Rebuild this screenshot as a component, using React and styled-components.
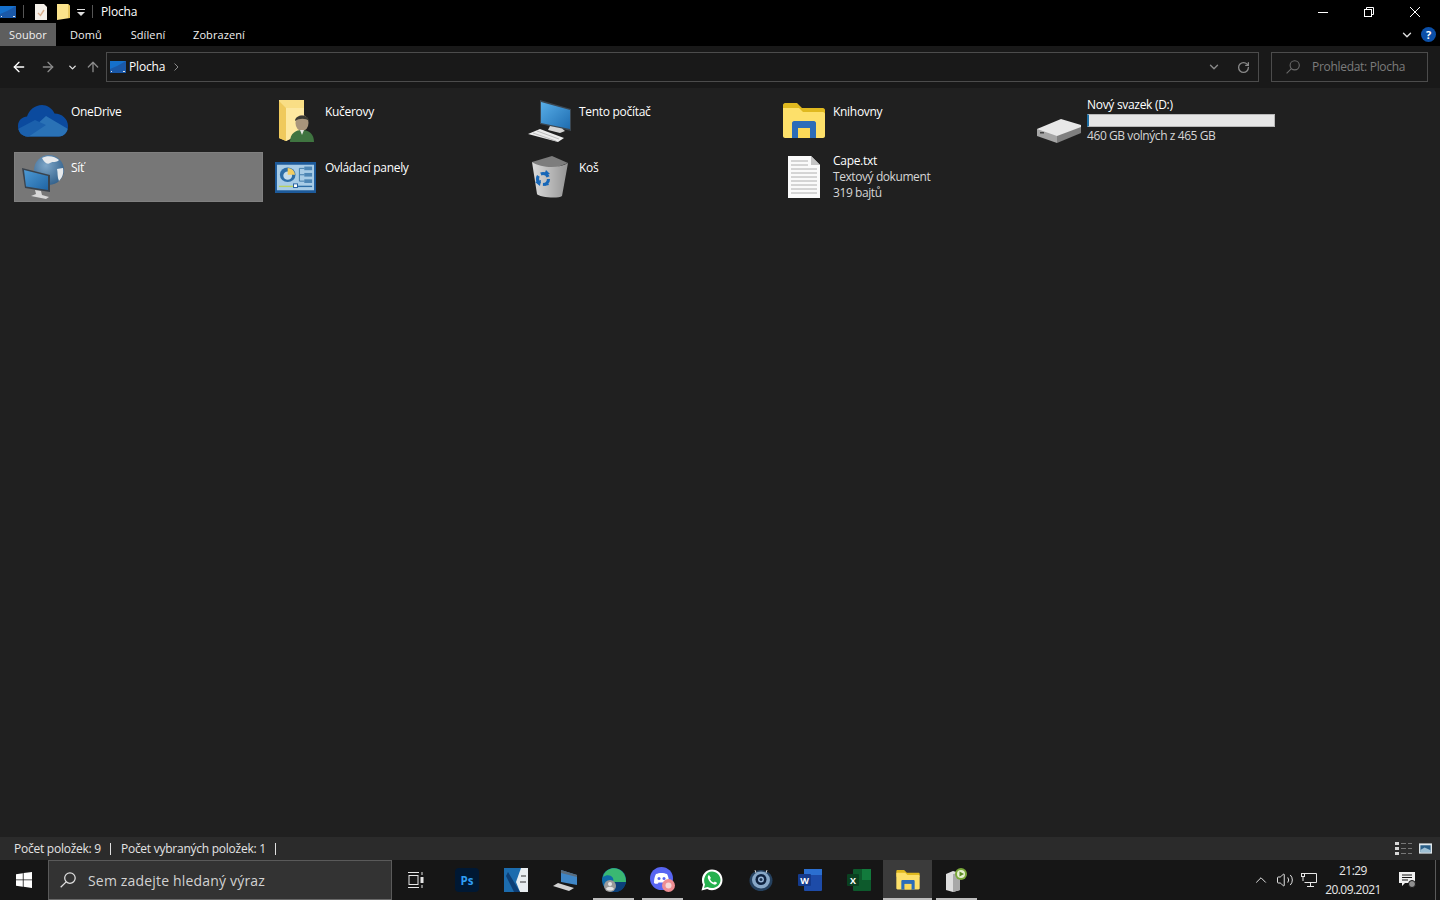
import React from "react";
import styled, { createGlobalStyle } from "styled-components";
import { ArrowLeft, ArrowRight, ArrowUp, ChevronDown, RotateCw, ChevronUp, Volume2 } from "lucide-react";

const GlobalStyle = createGlobalStyle`
  html, body { margin: 0; padding: 0; background: #202020; }
  body { font-family: "Open Sans", "Noto Sans", "Liberation Sans", sans-serif; font-size: 12px; color: #fff; }
  * { box-sizing: border-box; }
`;

const Page = styled.div`
  width: 1440px;
  height: 900px;
  display: flex;
  flex-direction: column;
  overflow: hidden;
  background: #202020;
`;

const TitleBar = styled.div`
  height: 23px;
  background: #000;
  display: flex;
  align-items: center;
`;
const QuickIcons = styled.div`
  width: 101px;
  height: 23px;
  display: flex;
  align-items: center;
`;
const QuickGap = styled.span`
  width: ${(p) => p.$w}px;
`;
const TitleSep = styled.div`
  width: 1px;
  height: 13px;
  background: #555;
  margin: ${(p) => p.$margin};
`;
const TitleText = styled.div`
  flex: 1;
  font-size: 12px;
  letter-spacing: -0.15px;
`;
const WinButton = styled.div`
  width: 46px;
  height: 22px;
  display: flex;
  align-items: center;
  justify-content: center;
`;
const WinControls = styled.div`
  display: flex;
  padding-right: 2px;
`;

const Ribbon = styled.div`
  height: 23px;
  background: #000;
  display: flex;
  align-items: center;
`;
const RibbonTab = styled.div`
  height: 23px;
  display: flex;
  align-items: center;
  justify-content: center;
  width: ${(p) => p.$w}px;
  background: ${(p) => (p.$active ? "#5e5e5e" : "transparent")};
  font-size: 11px;
  letter-spacing: 0.1px;
  color: #f0f0f0;
`;
const RibbonRight = styled.div`
  margin-left: auto;
  display: flex;
  align-items: center;
  gap: 7px;
  padding-right: 4px;
`;
const Help = styled.div`
  width: 15px;
  height: 15px;
  border-radius: 50%;
  background: #0b4fa8;
  color: #fff;
  font-size: 11px;
  font-weight: 700;
  display: flex;
  align-items: center;
  justify-content: center;
`;

const AddressRow = styled.div`
  height: 42px;
  background: #191919;
  display: flex;
  align-items: center;
  padding-left: 11px;
`;
const NavButton = styled.div`
  width: ${(p) => p.$w}px;
  margin-right: ${(p) => p.$mr || 0}px;
  flex-shrink: 0;
  display: flex;
  align-items: center;
  justify-content: center;
  svg {
    flex-shrink: 0;
  }
`;
const AddressBox = styled.div`
  width: 1153px;
  height: 30px;
  flex-shrink: 0;
  margin-left: 1px;
  border: 1px solid #4c4c4c;
  display: flex;
  align-items: center;
  padding-left: 3px;
`;
const AddressText = styled.span`
  font-size: 12px;
  letter-spacing: -0.15px;
  margin: 0 9px 2px 3px;
`;
const AddressTools = styled.div`
  margin-left: auto;
  display: flex;
  align-items: center;
  gap: 16px;
  padding-right: 8px;
`;
const SearchBox = styled.div`
  width: 157px;
  height: 30px;
  flex-shrink: 0;
  margin-left: 12px;
  border: 1px solid #4c4c4c;
  display: flex;
  align-items: center;
  padding-left: 14px;
  gap: 12px;
  color: #7c7c7c;
  font-size: 12px;
  letter-spacing: -0.3px;
  span {
    margin-bottom: 2px;
  }
`;

const Content = styled.div`
  flex: 1;
  background: #202020;
  padding: 8px 0 0 14px;
  display: grid;
  grid-template-columns: repeat(5, 249px);
  grid-auto-rows: 50px;
  column-gap: 5px;
  row-gap: 6px;
  align-content: start;
`;
const Tile = styled.div`
  height: 50px;
  display: flex;
  background: ${(p) => (p.$selected ? "#777777" : "transparent")};
  border: 1px solid ${(p) => (p.$selected ? "#808080" : "transparent")};
`;
const IconSlot = styled.div`
  width: 56px;
  flex-shrink: 0;
  padding: ${(p) => p.$drop || 0}px ${(p) => p.$pr || 1}px 0 0;
  display: flex;
  align-items: center;
  justify-content: center;
`;
const TileText = styled.div`
  padding-top: ${(p) => (p.$multi ? 0 : 7)}px;
  line-height: 16px;
  font-size: 12px;
  letter-spacing: -0.3px;
  color: #fff;
  white-space: nowrap;
`;
const SubLine = styled.div`
  color: #d6d6d6;
  letter-spacing: -0.42px;
`;
const UsageBar = styled.div`
  width: 188px;
  height: 13px;
  margin: 1px 0 1px;
  background: #e6e6e6;
  border: 1px solid #b8b8b8;
  border-left: 2px solid #1c6ea4;
`;

const StatusBar = styled.div`
  height: 23px;
  background: #2b2b2b;
  display: flex;
  align-items: center;
  padding: 0 8px 0 14px;
  font-size: 12px;
  letter-spacing: -0.25px;
  color: #e4e4e4;
`;
const StatusSep = styled.div`
  width: 1px;
  height: 12px;
  background: #e0e0e0;
  margin: 0 10px 0 9px;
`;
const StatusRight = styled.div`
  margin-left: auto;
  display: flex;
  align-items: center;
  gap: 7px;
`;

const Taskbar = styled.div`
  height: 40px;
  background: #161616;
  display: flex;
  align-items: stretch;
`;
const StartButton = styled.div`
  width: 48px;
  display: flex;
  align-items: center;
  justify-content: center;
`;
const SearchField = styled.div`
  width: 344px;
  background: #333;
  border: 1px solid #5a5a5a;
  border-bottom-color: #6a6a6a;
  display: flex;
  align-items: center;
  padding-left: 11px;
  gap: 12px;
  font-size: 14px;
  letter-spacing: 0.18px;
  color: #d2d2d2;
`;
const TaskButton = styled.div`
  position: relative;
  width: ${(p) => p.$w || 49}px;
  padding-right: ${(p) => p.$pr || 0}px;
  display: flex;
  align-items: center;
  justify-content: center;
  background: ${(p) => (p.$active ? "#3b3b3b" : "transparent")};
  &::after {
    content: "";
    display: ${(p) => (p.$running ? "block" : "none")};
    position: absolute;
    left: ${(p) => (p.$active ? 0 : 4)}px;
    right: ${(p) => (p.$active ? 0 : 4)}px;
    bottom: 0;
    height: 2px;
    background: #bdbdbd;
  }
`;
const Tray = styled.div`
  margin-left: auto;
  display: flex;
  align-items: center;
`;
const TrayIcon = styled.div`
  width: 24px;
  display: flex;
  align-items: center;
  justify-content: center;
`;
const Clock = styled.div`
  width: 64px;
  text-align: center;
  font-size: 12px;
  letter-spacing: -0.55px;
  line-height: 19px;
  color: #e8e8e8;
`;
const NotifyButton = styled.div`
  width: 44px;
  margin-right: 6px;
  display: flex;
  align-items: center;
  justify-content: center;
`;
const ShowDesktop = styled.div`
  width: 1px;
  align-self: stretch;
  margin-right: 4px;
  background: #5a5a5a;
`;

// --- drawings ---

const DesktopMini = () => (
  <svg width="16" height="12" viewBox="0 0 16 12">
    <rect width="16" height="12" fill="#1570cc" />
    <path d="M0 8 Q8 5 16 0 V12 H0Z" fill="#1a58a8" />
    <rect y="10" x="1" width="1" height="1" fill="#e6e6e6" />
    <rect y="10" x="13" width="2" height="1" fill="#e6e6e6" />
  </svg>
);
const DocMini = () => (
  <svg width="12" height="16" viewBox="0 0 12 16">
    <path d="M0 0H9L12 3V16H0Z" fill="#f4f0ea" />
    <path d="M3 9L5.500 11.500L9 6" fill="none" stroke="#d8b090" strokeWidth="1.4" />
  </svg>
);
const FolderMini = () => (
  <svg width="13" height="16" viewBox="0 0 13 16">
    <path d="M0 0H11L13 2V14L0 16Z" fill="#fbe38c" />
    <path d="M11 0L13 2V14H11Z" fill="#e8c860" />
  </svg>
);
const QuickArrow = () => (
  <svg width="8" height="8" viewBox="0 0 8 8">
    <rect y="1" width="8" height="1" fill="#ddd" />
    <path d="M0 4H8L4 8Z" fill="#ddd" />
  </svg>
);
const MinIcon = () => (
  <svg width="10" height="10" viewBox="0 0 10 10"><rect y="5" width="10" height="1" fill="#fff" /></svg>
);
const RestoreIcon = () => (
  <svg width="10" height="10" viewBox="0 0 10 10" fill="none" stroke="#fff">
    <rect x="0.5" y="2.5" width="7" height="7" />
    <path d="M2.5 2.5V0.5H9.5V7.5H7.5" />
  </svg>
);
const CloseIcon = () => (
  <svg width="10" height="10" viewBox="0 0 10 10" stroke="#fff"><path d="M0 0L10 10M10 0L0 10" /></svg>
);
const LensIcon = ({ color, size = 14 }) => (
  <svg width={size} height={size} viewBox="0 0 14 14" fill="none" stroke={color} strokeWidth="1.1">
    <circle cx="8.7" cy="5.3" r="4.6" />
    <path d="M5.4 8.6L0.6 13.4" />
  </svg>
);

const CLOUD = "M10 31.500C3 31.500 0 26 0 21C0 15 5 11.500 9 11.500C11 5 17 0 24 0C29 0 34 3 36.500 8.500C44 8.500 50 14 50 21C50 27 46 31.500 41 31.500Z";
const OneDriveIcon = () => (
  <svg width="50" height="32" viewBox="0 0 50 32">
    <defs>
      <clipPath id="cloudClip"><path d={CLOUD} /></clipPath>
    </defs>
    <path d={CLOUD} fill="#0b4a9e" />
    <g clipPath="url(#cloudClip)">
      <path d="M5 32L28 11L50 24V32Z" fill="#2a72b6" />
      <path d="M0 24L17 15L28 20L10 32H0Z" fill="#1b60ac" />
    </g>
  </svg>
);
const UserFolderIcon = () => (
  <svg width="36" height="42" viewBox="0 0 36 42">
    <path d="M0 0H25V32L7 41L0 38Z" fill="#f9de85" />
    <path d="M0 1L7 8V41L0 38Z" fill="#efc95c" />
    <path d="M7 8H25V32L7 41Z" fill="#fde8a0" />
    <ellipse cx="23" cy="23" rx="6.500" ry="8" fill="#a8957c" />
    <path d="M16 21C16 14 30 14 30 21C27 18 20 18 16 21Z" fill="#3a3a34" />
    <path d="M11 42C11 33 17 30 23 30C30 30 35 34 35 42Z" fill="#3f7440" />
    <path d="M21 30L23 35L25 30Z" fill="#e6e6e0" />
  </svg>
);
const NetworkIcon = () => (
  <svg width="42" height="44" viewBox="0 0 42 44">
    <defs>
      <radialGradient id="globe" cx="0.4" cy="0.35" r="0.75">
        <stop offset="0" stopColor="#7ea6c8" />
        <stop offset="1" stopColor="#2c5b86" />
      </radialGradient>
      <linearGradient id="netScreen" x1="0" y1="0" x2="1" y2="1">
        <stop offset="0" stopColor="#4e9ad4" />
        <stop offset="1" stopColor="#1f64a4" />
      </linearGradient>
    </defs>
    <circle cx="27" cy="15" r="15" fill="url(#globe)" />
    <path d="M20 3C25 0 33 1 37 5C34 8 31 6 28 8C25 10 22 7 20 3ZM35 14L41 13C42 19 40 23 37 26C35 22 36 18 35 14Z" fill="#e6e9ec" />
    <path d="M0 13L28 20V37L3 33Z" fill="#39424c" />
    <path d="M2 15L26 21V35L4 31.500Z" fill="url(#netScreen)" />
    <path d="M13 35L19 36L20 40L27 42L24 44L9 41L14 39Z" fill="#d8d8d8" />
  </svg>
);
const ControlPanelIcon = () => (
  <svg width="41" height="31" viewBox="0 0 42 34" preserveAspectRatio="none">
    <rect width="42" height="34" fill="#1d5a9a" />
    <rect x="2" y="3" width="38" height="28" fill="#a8cce6" />
    <circle cx="13" cy="14" r="8" fill="#2d6da6" />
    <circle cx="13" cy="15" r="4.500" fill="#c6ddec" />
    <path d="M13 6.500A7.500 7.500 0 0 1 20.500 14H13Z" fill="#f2cc60" />
    <rect x="30" y="5" width="8" height="4" fill="#4d86b5" />
    <rect x="30" y="12" width="8" height="4" fill="#4d86b5" />
    <rect x="30" y="19" width="8" height="4" fill="#4d86b5" />
    <path d="M25 7H30M25 7V14H30M25 14V21H30" stroke="#3d78a8" fill="none" />
    <rect x="4" y="26" width="16" height="1.500" fill="#b8d060" />
    <rect x="20" y="26" width="18" height="1.500" fill="#2d6da6" />
    <rect x="19" y="24" width="4" height="4" fill="#fff" stroke="#1d5a9a" />
  </svg>
);
const ComputerIcon = () => (
  <svg width="44" height="42" viewBox="0 0 44 42">
    <defs>
      <linearGradient id="pcScreen" x1="0" y1="0" x2="1" y2="1">
        <stop offset="0" stopColor="#58aee8" />
        <stop offset="1" stopColor="#1e6cb0" />
      </linearGradient>
    </defs>
    <path d="M12 0L43 9V31L12 24Z" fill="#3b4650" />
    <path d="M13 2L42 10V29L13 23Z" fill="url(#pcScreen)" />
    <path d="M22 26L34 28.500L37 31L32 33L20 30Z" fill="#d4d4d4" />
    <path d="M12 29L36 38L30 42L0 34Z" fill="#ececec" />
    <path d="M9 31L31 39M5 33L28 41" stroke="#9b9b9b" strokeWidth="0.6" />
  </svg>
);
const LibraryIcon = ({ w = 42, h = 36 }) => (
  <svg width={w} height={h} viewBox="0 0 42 36">
    <path d="M0 2C0 1 1 0 2 0H14L19 5H40C41 5 42 6 42 7V12H0Z" fill="#e0b91f" />
    <path d="M0 5H16L20 9H40C41 9 42 10 42 11V33C42 34 41 35 40 35H2C1 35 0 34 0 33Z" fill="#fde06a" />
    <path d="M9 35V20C9 19 10 18 11 18H31C32 18 33 19 33 20V35H27V25H15V35Z" fill="#2c6cb8" />
    <rect x="15" y="25" width="12" height="10" fill="#fbd858" />
  </svg>
);
const BinIcon = () => (
  <svg width="38" height="42" viewBox="0 0 38 42">
    <defs>
      <linearGradient id="binBody" x1="0" y1="0" x2="1" y2="0">
        <stop offset="0" stopColor="#dcdcdc" />
        <stop offset="1" stopColor="#949494" />
      </linearGradient>
    </defs>
    <path d="M1 6L21 0L37 7L24 12L6 11Z" fill="#7d7d7d" />
    <path d="M1 6L6 38C7 41 27 43 31 40L37 7C28 13 10 12 1 6Z" fill="url(#binBody)" />
    <circle cx="12" cy="23" r="5.500" fill="none" stroke="#1767b8" strokeWidth="3.200" strokeDasharray="8.500 3" />
    <path d="M15 14L19 18L13 19ZM4 26L10 24L9 30ZM18 29L13 30L16 25Z" fill="#1767b8" />
  </svg>
);
const TextFileIcon = () => (
  <svg width="32" height="42" viewBox="0 0 32 42">
    <path d="M0 0H23L32 9V42H0Z" fill="#fafafa" />
    <path d="M23 0L32 9H23Z" fill="#c4c4c4" />
    <path d="M3 5H20M3 9H20M3 13H29M3 17H29M3 21H29M3 25H29M3 29H29M3 33H29M3 37H29" stroke="#9d9d9d" strokeWidth="0.8" />
  </svg>
);
const DriveIcon = () => (
  <svg width="44" height="24" viewBox="0 0 44 24">
    <path d="M0 10L24 0L44 6V10L20 20L0 14Z" fill="#e8e8e8" />
    <path d="M0 10L20 17V24L0 17Z" fill="#a5a5a5" />
    <path d="M20 17L44 8V14L20 24Z" fill="#7f7f7f" />
    <rect x="3" y="13" width="4" height="1.500" fill="#444" />
  </svg>
);

const WinLogo = () => (
  <svg width="16" height="16" viewBox="0 0 16 16" fill="#fff">
    <path d="M0 2.200L6.800 1.200V7.500H0ZM7.600 1.100L16 0V7.500H7.600ZM0 8.300H6.800V14.700L0 13.800ZM7.600 8.300H16V16L7.600 14.800Z" />
  </svg>
);
const TaskViewIcon = () => (
  <svg width="16" height="16" viewBox="0 0 16 16" fill="none" stroke="#e6e6e6">
    <path d="M0 0.500H11M0 15.500H11" />
    <rect x="1" y="3.500" width="9" height="9" />
    <path d="M14 0V3M14 13V16" />
    <rect x="12.500" y="5" width="3" height="6" fill="#e6e6e6" stroke="none" />
  </svg>
);
const PsIcon = () => (
  <svg width="24" height="24" viewBox="0 0 24 24">
    <rect width="24" height="24" rx="4" fill="#001833" />
    <text x="12" y="16.500" textAnchor="middle" fontSize="11.500" fontWeight="700" fill="#2f9df4" fontFamily="Open Sans, sans-serif">Ps</text>
  </svg>
);
const VectorIcon = () => (
  <svg width="24" height="24" viewBox="0 0 24 24">
    <rect width="24" height="24" fill="#1c6cae" />
    <path d="M24 0V24H16L12 14L17 0Z" fill="#e8edf0" />
    <path d="M4 4L16 24H10L2 8Z" fill="#0d3f76" />
    <path d="M17 8L22 8M16 14L22 14" stroke="#333" strokeWidth="1" />
  </svg>
);
const LaptopIcon = () => (
  <svg width="24" height="24" viewBox="0 0 24 24">
    <path d="M8 2L24 7V17L8 14Z" fill="#3f86c6" />
    <path d="M8 2L24 7V9L8 5Z" fill="#5a6c7c" />
    <path d="M5 15L21 20L16 23L0 18Z" fill="#d2d2d2" />
  </svg>
);
const EdgeIcon = () => (
  <svg width="26" height="26" viewBox="0 0 26 26">
    <circle cx="13" cy="13" r="12" fill="#0f6aa8" />
    <path d="M2 10C4 2 12 0 17 2C23 4 25 10 25 15H12C14 10 8 6 2 10Z" fill="#3ab872" />
    <path d="M12 15H25C24 21 20 25 14 25C10 25 8 23 7 20C9 22 14 20 12 15Z" fill="#0b3f7a" />
    <circle cx="9" cy="19" r="6" fill="#9a9a9a" />
    <circle cx="9" cy="17" r="2" fill="#e4e4e4" />
    <path d="M5 22C6 19 12 19 13 22C11 24 7 24 5 22Z" fill="#e4e4e4" />
  </svg>
);
const DiscordIcon = () => (
  <svg width="26" height="26" viewBox="0 0 26 26">
    <circle cx="11.500" cy="11.500" r="11.500" fill="#5865f2" />
    <path d="M6 7C9 5.500 14 5.500 17 7C18.500 9.500 19 13 19 16C17.500 17 16 17 15 16.500L14.500 15.500H8.500L8 16.500C7 17 5.500 17 4 16C4 13 4.500 9.500 6 7Z" fill="#fff" />
    <circle cx="9" cy="11.500" r="1.500" fill="#5865f2" />
    <circle cx="14" cy="11.500" r="1.500" fill="#5865f2" />
    <circle cx="18.500" cy="18.500" r="6.500" fill="#ee8d92" />
    <circle cx="18.500" cy="18.500" r="3" fill="#f6d6d8" />
  </svg>
);
const WhatsAppIcon = () => (
  <svg width="22" height="22" viewBox="0 0 22 22">
    <path d="M0.500 21.500L2 15.800C-1 10 2.500 0.500 11 0.500C17 0.500 21.500 5 21.500 11C21.500 19 12.500 23.500 6.200 20Z" fill="#fff" />
    <path d="M3 19L4 15.500C1.500 10.500 4.500 2.500 11 2.500C15.700 2.500 19.500 6.300 19.500 11C19.500 17.500 12 21 6.500 18Z" fill="#25b14e" />
    <path d="M8 6C7 6.500 6.500 8 7 9.500C8 12.500 10 14.500 13 15.500C14.500 16 16 15 16 13.800L13.800 12.600L12.800 13.600C11 13 9.500 11.500 9 10L10 9Z" fill="#fff" />
  </svg>
);
const CamIcon = () => (
  <svg width="24" height="24" viewBox="0 0 24 24">
    <ellipse cx="12" cy="12.500" rx="11.500" ry="10.500" fill="#25415f" />
    <ellipse cx="12" cy="12" rx="9" ry="8.500" fill="#88a8c8" />
    <circle cx="12" cy="11.500" r="5.500" fill="#0f2340" />
    <circle cx="12" cy="11.500" r="3" fill="#9bb8d8" />
    <circle cx="12" cy="11.500" r="1.500" fill="#1a3250" />
    <path d="M6 2L7 5M18 2L17 5" stroke="#d0d0d0" />
  </svg>
);
const WordIcon = () => (
  <svg width="24" height="24" viewBox="0 0 24 24">
    <rect x="6" y="1" width="18" height="22" rx="1" fill="#1d4ba8" />
    <rect x="6" y="1" width="18" height="6" fill="#2b6fd0" />
    <rect y="6" width="13" height="12" rx="1" fill="#143a8c" />
    <text x="6.500" y="15.500" textAnchor="middle" fontSize="9" fontWeight="700" fill="#fff" fontFamily="Open Sans, sans-serif">W</text>
  </svg>
);
const ExcelIcon = () => (
  <svg width="24" height="24" viewBox="0 0 24 24">
    <rect x="6" y="1" width="18" height="22" rx="1" fill="#0d5a2c" />
    <rect x="15" y="1" width="9" height="11" fill="#127a3c" />
    <rect y="6" width="12" height="12" rx="1" fill="#0a4020" />
    <text x="6" y="15.500" textAnchor="middle" fontSize="9" fontWeight="700" fill="#fff" fontFamily="Open Sans, sans-serif">X</text>
  </svg>
);
const PinnedIcon = () => (
  <svg width="24" height="24" viewBox="0 0 24 24">
    <path d="M1 6L8 3L15 5V22L8 24L1 22Z" fill="#dedede" />
    <path d="M8 6L15 5V22L8 24Z" fill="#a8a8a8" />
    <circle cx="16" cy="6" r="6" fill="#7aa83a" />
    <circle cx="16" cy="6" r="4" fill="#e6f0d0" />
    <path d="M14.500 3.500L19 6L14.500 8.500Z" fill="#5c8c24" />
  </svg>
);
const ListViewIcon = () => (
  <svg width="17" height="13" viewBox="0 0 17 13">
    <rect width="4" height="3" fill="#d8d8d8" />
    <rect y="5" width="4" height="3" fill="#d8d8d8" />
    <rect y="10" width="4" height="3" fill="#d8d8d8" />
    <path d="M6 1.500H11M13 1.500H17M6 6.500H11M13 6.500H17M6 11.500H11M13 11.500H17" stroke="#777" />
  </svg>
);
const LargeViewIcon = () => (
  <svg width="13" height="11" viewBox="0 0 14 11">
    <rect width="14" height="11" fill="#e0e8ec" />
    <rect x="1.500" y="2" width="11" height="7.500" fill="#2a5f88" />
    <path d="M1.500 7L6 4.500L12.500 7.500V9.500H1.500Z" fill="#9fc0d4" />
  </svg>
);
const NetTrayIcon = () => (
  <svg width="16" height="14" viewBox="0 0 16 14" fill="none" stroke="#e6e6e6">
    <path d="M3.500 0.500H15.500V9.500H3.500" />
    <path d="M9.500 9.500V13M6 13.500H13" />
    <rect x="0.500" y="0.500" width="3" height="3" fill="#161616" />
    <path d="M2 3.500V8" />
  </svg>
);
const NotifyIcon = () => (
  <svg width="17" height="16" viewBox="0 0 17 16">
    <path d="M0 0H16V11H6L3 14V11H0Z" fill="#f2f2f2" />
    <path d="M3 3H13M3 5.500H13M3 8H9" stroke="#161616" />
    <circle cx="13" cy="12" r="3.500" fill="#8f8f8f" stroke="#161616" />
  </svg>
);

const items = [
  { name: "OneDrive", icon: <OneDriveIcon /> },
  { name: "Kučerovy", icon: <UserFolderIcon /> },
  { name: "Tento počítač", icon: <ComputerIcon />, pr: 3 },
  { name: "Knihovny", icon: <LibraryIcon />, pr: 3 },
  { name: "Nový svazek (D:)", icon: <DriveIcon />, drive: "460 GB volných z 465 GB", drop: 20 },
  { name: "Síť", icon: <NetworkIcon />, selected: true },
  { name: "Ovládací panely", icon: <ControlPanelIcon />, pr: 3 },
  { name: "Koš", icon: <BinIcon />, pr: 3 },
  { name: "Cape.txt", icon: <TextFileIcon />, lines: ["Textový dokument", "319 bajtů"], pr: 3 },
];

const apps = [
  { key: "ps", icon: <PsIcon /> },
  { key: "vw", icon: <VectorIcon /> },
  { key: "laptop", icon: <LaptopIcon /> },
  { key: "edge", icon: <EdgeIcon />, running: true },
  { key: "discord", icon: <DiscordIcon />, running: true },
  { key: "wa", icon: <WhatsAppIcon /> },
  { key: "cam", icon: <CamIcon /> },
  { key: "word", icon: <WordIcon /> },
  { key: "excel", icon: <ExcelIcon /> },
  { key: "files", icon: <LibraryIcon w={24} h={20} />, running: true, active: true },
  { key: "pinned", icon: <PinnedIcon />, running: true },
];

export default function App() {
  return (
    <Page>
      <GlobalStyle />
      <TitleBar>
        <QuickIcons>
          <DesktopMini />
          <TitleSep $margin="0 11px 0 7px" />
          <DocMini />
          <QuickGap $w={10} />
          <FolderMini />
          <QuickGap $w={7} />
          <QuickArrow />
          <TitleSep $margin="0 0 0 7px" />
        </QuickIcons>
        <TitleText>Plocha</TitleText>
        <WinControls>
          <WinButton><MinIcon /></WinButton>
          <WinButton><RestoreIcon /></WinButton>
          <WinButton><CloseIcon /></WinButton>
        </WinControls>
      </TitleBar>
      <Ribbon>
        <RibbonTab $active $w={56}>Soubor</RibbonTab>
        <RibbonTab $w={60}>Domů</RibbonTab>
        <RibbonTab $w={64}>Sdílení</RibbonTab>
        <RibbonTab $w={78}>Zobrazení</RibbonTab>
        <RibbonRight>
          <ChevronDown size={14} color="#ddd" strokeWidth={2.4} />
          <Help>?</Help>
        </RibbonRight>
      </Ribbon>
      <AddressRow>
        <NavButton $w={16}><ArrowLeft size={16} color="#fff" strokeWidth={2} /></NavButton>
        <NavButton $w={42}><ArrowRight size={16} color="#8a8a8a" strokeWidth={2} /></NavButton>
        <NavButton $w={6} $mr={6}><ChevronDown size={11} color="#e0e0e0" strokeWidth={3} /></NavButton>
        <NavButton $w={24}><ArrowUp size={16} color="#8a8a8a" strokeWidth={2} /></NavButton>
        <AddressBox>
          <DesktopMini />
          <AddressText>Plocha</AddressText>
          <svg width="5" height="8" viewBox="0 0 5 8" fill="none" stroke="#8a8a8a"><path d="M0.500 0.500L4 4L0.500 7.500" /></svg>
          <AddressTools>
            <ChevronDown size={14} color="#8a8a8a" strokeWidth={2.4} />
            <RotateCw size={13} color="#8a8a8a" strokeWidth={2.4} />
          </AddressTools>
        </AddressBox>
        <SearchBox>
          <LensIcon color="#6a6a6a" />
          <span>Prohledat: Plocha</span>
        </SearchBox>
      </AddressRow>
      <Content>
        {items.map((item) => (
          <Tile key={item.name} $selected={item.selected}>
            <IconSlot $drop={item.drop} $pr={item.pr}>{item.icon}</IconSlot>
            <TileText $multi={!!(item.lines || item.drive)}>
              {item.name}
              {item.lines && item.lines.map((l) => <SubLine key={l}>{l}</SubLine>)}
              {item.drive && <UsageBar />}
              {item.drive && <SubLine>{item.drive}</SubLine>}
            </TileText>
          </Tile>
        ))}
      </Content>
      <StatusBar>
        <span>Počet položek: 9</span>
        <StatusSep />
        <span>Počet vybraných položek: 1</span>
        <StatusSep />
        <StatusRight>
          <ListViewIcon />
          <LargeViewIcon />
        </StatusRight>
      </StatusBar>
      <Taskbar>
        <StartButton><WinLogo /></StartButton>
        <SearchField>
          <LensIcon color="#e0e0e0" size={16} />
          <span>Sem zadejte hledaný výraz</span>
        </SearchField>
        <TaskButton $w={50} $pr={2}><TaskViewIcon /></TaskButton>
        {apps.map((a) => (
          <TaskButton key={a.key} $running={a.running} $active={a.active}>{a.icon}</TaskButton>
        ))}
        <Tray>
          <TrayIcon><ChevronUp size={18} color="#e6e6e6" strokeWidth={1.3} /></TrayIcon>
          <TrayIcon><Volume2 size={18} color="#e6e6e6" strokeWidth={1.3} /></TrayIcon>
          <TrayIcon><NetTrayIcon /></TrayIcon>
          <Clock>21:29<br />20.09.2021</Clock>
          <NotifyButton><NotifyIcon /></NotifyButton>
          <ShowDesktop />
        </Tray>
      </Taskbar>
    </Page>
  );
}
